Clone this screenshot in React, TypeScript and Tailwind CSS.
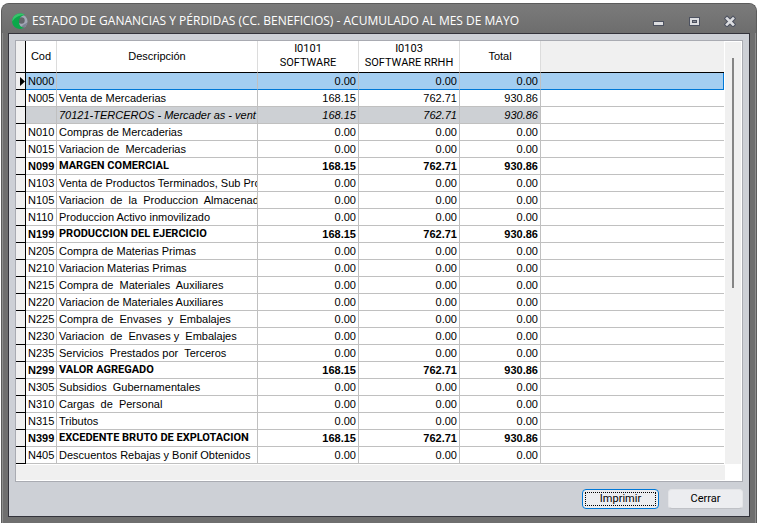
import clsx from "clsx";

type Row = {
  code: string;
  desc: string;
  values: [string, string, string];
  kind?: "selected" | "detail" | "total";
};

const ZERO: Row["values"] = ["0.00", "0.00", "0.00"];
const SALES: Row["values"] = ["168.15", "762.71", "930.86"];

const rows: Row[] = [
  { code: "N000", desc: "", values: ZERO, kind: "selected" },
  { code: "N005", desc: "Venta de Mercaderias", values: SALES },
  { code: "", desc: "70121-TERCEROS - Mercader as - vent", values: SALES, kind: "detail" },
  { code: "N010", desc: "Compras de Mercaderias", values: ZERO },
  { code: "N015", desc: "Variacion de  Mercaderias", values: ZERO },
  { code: "N099", desc: "MARGEN COMERCIAL", values: SALES, kind: "total" },
  { code: "N103", desc: "Venta de Productos Terminados, Sub Pro", values: ZERO },
  { code: "N105", desc: "Variacion  de  la  Produccion  Almacenad", values: ZERO },
  { code: "N110", desc: "Produccion Activo inmovilizado", values: ZERO },
  { code: "N199", desc: "PRODUCCION DEL EJERCICIO", values: SALES, kind: "total" },
  { code: "N205", desc: "Compra de Materias Primas", values: ZERO },
  { code: "N210", desc: "Variacion Materias Primas", values: ZERO },
  { code: "N215", desc: "Compra de  Materiales  Auxiliares", values: ZERO },
  { code: "N220", desc: "Variacion de Materiales Auxiliares", values: ZERO },
  { code: "N225", desc: "Compra de  Envases  y  Embalajes", values: ZERO },
  { code: "N230", desc: "Variacion  de  Envases y  Embalajes", values: ZERO },
  { code: "N235", desc: "Servicios  Prestados por  Terceros", values: ZERO },
  { code: "N299", desc: "VALOR AGREGADO", values: SALES, kind: "total" },
  { code: "N305", desc: "Subsidios  Gubernamentales", values: ZERO },
  { code: "N310", desc: "Cargas  de  Personal", values: ZERO },
  { code: "N315", desc: "Tributos", values: ZERO },
  { code: "N399", desc: "EXCEDENTE BRUTO DE EXPLOTACION", values: SALES, kind: "total" },
  { code: "N405", desc: "Descuentos Rebajas y Bonif Obtenidos", values: ZERO },
];

function Logo() {
  return (
    <svg viewBox="0 0 16 16" className="w-4 h-4 shrink-0" aria-hidden="true">
      <circle cx="8.500" cy="8.500" r="7" fill="#a3a8b6" />
      <path d="M15.400 9.500a7 7 0 0 1-7.400 6l3-3.500z" fill="#7d8294" />
      <circle cx="9.500" cy="7.500" r="3.200" fill="#64656b" />
      <path d="M12.800 1.800C8.600-.8 2.800.2.800 5c-2 4.600.6 9.600 5.400 10.700 2.200.5 4.400.2 6-1.200-3.400.2-5.400-2.600-5.200-6.300C7.100 5 9.300 2.600 12.800 1.800z" fill="#0ba84a" />
      <path d="M12.800 1.800C8.600-.8 2.800.2.800 5c-.5 1.200-.7 2.400-.5 3.600C2.600 4.600 7 2.200 12.800 1.800z" fill="#35c56b" />
    </svg>
  );
}

const caption = "w-9 h-7 flex items-center justify-center";

function TitleBar() {
  return (
    <header className="flex items-center h-[29px] pl-[10px] pr-2 pt-1 bg-linear-to-b from-[#7b7b7b] to-[#6d6d6d]">
      <Logo />
      <h1 className="ml-1 flex-1 truncate text-[12px] leading-5 text-white font-['Open_Sans',sans-serif]">
        ESTADO DE GANANCIAS Y PÉRDIDAS (CC. BENEFICIOS) - ACUMULADO AL MES DE MAYO
      </h1>
      <button type="button" aria-label="Minimizar" className={caption}>
        <svg viewBox="0 0 12 12" className="w-3 h-3" shapeRendering="crispEdges">
          <rect x="1" y="6" width="11" height="5" fill="#4d5260" />
          <rect x="2" y="7" width="9" height="3" fill="#dcdde0" />
        </svg>
      </button>
      <button type="button" aria-label="Maximizar" className={caption}>
        <svg viewBox="0 0 12 12" className="w-3 h-3" shapeRendering="crispEdges">
          <rect x="1" y="2" width="11" height="9" fill="#4d5260" />
          <rect x="2" y="3" width="9" height="7" fill="#dcdde0" />
          <rect x="4" y="5" width="5" height="3" fill="#4d5260" />
          <rect x="5" y="6" width="3" height="1" fill="#8a8d96" />
        </svg>
      </button>
      <button type="button" aria-label="Cerrar ventana" className={caption}>
        <svg viewBox="0 0 12 12" className="w-3 h-3">
          <path d="M3 3.500l6 6M9 3.500l-6 6" stroke="#4d5260" strokeWidth="4.600" strokeLinecap="square" />
          <path d="M3 3.500l6 6M9 3.500l-6 6" stroke="#dcdde0" strokeWidth="2.600" strokeLinecap="square" />
        </svg>
      </button>
    </header>
  );
}

const headCell = "p-0 pb-0.5 font-normal border-r border-b border-r-[#dcdcdc] border-b-black bg-white";

function StatementTable() {
  return (
    <table className="w-full table-fixed border-separate border-spacing-0 text-[11px] leading-4 text-black">
      <colgroup>
        <col className="w-[10px]" />
        <col className="w-[31px]" />
        <col className="w-[201px]" />
        <col className="w-[101px]" />
        <col className="w-[101px]" />
        <col className="w-[81px]" />
        <col />
      </colgroup>
      <thead>
        <tr className="h-8">
          <td className="p-0 bg-[#f0f0f0] border-r border-b border-black" />
          <th scope="col" className={headCell}>Cod</th>
          <th scope="col" className={headCell}>Descripción</th>
          <th scope="col" className={clsx(headCell, "leading-[14px] font-['Roboto',sans-serif]")}>
            I0101<br />SOFTWARE
          </th>
          <th scope="col" className={clsx(headCell, "leading-[14px] font-['Roboto',sans-serif]")}>
            I0103<br />SOFTWARE RRHH
          </th>
          <th scope="col" className={headCell}>Total</th>
          <td className="p-0 bg-[#f0f0f0] border-b border-black" />
        </tr>
      </thead>
      <tbody>
        {rows.map((row) => {
          const selected = row.kind === "selected";
          const cell = clsx(
            "p-0 pl-0.5 border-r border-b border-r-[#c0c0c0] overflow-hidden whitespace-pre",
            selected ? "border-b-[#0078d7] bg-[#a4cef1]" : "border-b-[#c0c0c0]",
            row.kind === "detail" && "bg-[#cdd0d4] italic",
            row.kind === "total" && "font-bold"
          );
          return (
            <tr key={row.code + row.desc} className="h-[17px]" aria-selected={selected}>
              <td className="p-0 bg-[#f0f0f0] border-r border-b border-black">
                {selected && (
                  <svg viewBox="0 0 5 9" className="block ml-auto w-[5px] h-[9px]" aria-hidden="true">
                    <path d="M0 0l5 4.500L0 9z" fill="#000" />
                  </svg>
                )}
              </td>
              <td className={cell}>{row.code}</td>
              <td className={clsx(cell, row.kind === "total" && "font-['Roboto',sans-serif]")}>
                {row.desc}
              </td>
              {row.values.map((value, i) => (
                <td key={i} className={clsx(cell, "pr-0.5 text-right")}>{value}</td>
              ))}
              <td
                className={clsx(
                  "p-0 border-b",
                  selected ? "bg-[#a4cef1] border-r border-[#0078d7]" : "border-[#c0c0c0]"
                )}
              />
            </tr>
          );
        })}
      </tbody>
    </table>
  );
}

export default function App() {
  return (
    <div className="min-h-screen flex flex-col bg-white pt-[3px] pl-px font-['Liberation_Sans',Arial,sans-serif]">
      <div className="flex-1 flex flex-col rounded-t-lg overflow-hidden bg-[#6f6f6f] border-t border-x border-[#5c5c5c] shadow-[inset_1px_0_#8d8d8d,inset_-1px_0_#8d8d8d]">
        <TitleBar />
        <main className="flex-1 flex flex-col mx-[6px] mb-[6px] px-[6px] pt-[6px] border border-[#33333b] bg-[#cdd0d6]">
          {/* Grid with its scroll bars */}
          <section className="border border-[#a9abb2] bg-white pr-px pb-px">
            <div className="flex gap-px">
              <div className="flex-1 min-w-0">
                <StatementTable />
              </div>
              <div className="w-4 mt-px pt-4 bg-[#f0f0f0]">
                <div className="mx-auto w-0.5 h-[230px] bg-[#858585]" />
              </div>
            </div>
            <div className="h-[15px] mt-px mr-4 bg-[#f0f0f0]" />
          </section>

          {/* Actions */}
          <div className="flex justify-end gap-[9px] pt-[7px] text-[11px] leading-4 text-black font-['Roboto',sans-serif]">
            <button
              type="button"
              className="w-[77px] h-5 p-0.5 rounded-[4px] border border-[#0078d7] bg-[#ecedf0]"
            >
              <span className="flex h-full items-center justify-center border border-dotted border-black">
                Imprimir
              </span>
            </button>
            <button
              type="button"
              className="w-[75px] h-5 rounded-[4px] border border-[#e4e5e8] border-b-[#bfc1c6] bg-[#ecedf0]"
            >
              Cerrar
            </button>
          </div>
        </main>
      </div>
    </div>
  );
}
